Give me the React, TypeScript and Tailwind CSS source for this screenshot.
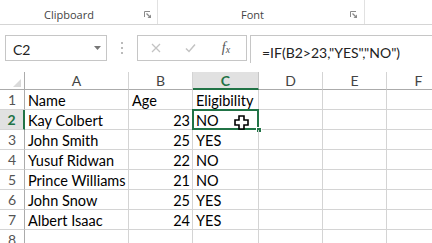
import React from 'react';

const cellFont = { fontFamily: 'Lato, "Open Sans", sans-serif' };

const rows = [
  { name: 'Name', age: 'Age', elig: 'Eligibility' },
  { name: 'Kay Colbert', age: '23', elig: 'NO' },
  { name: 'John Smith', age: '25', elig: 'YES' },
  { name: 'Yusuf Ridwan', age: '22', elig: 'NO' },
  { name: 'Prince Williams', age: '21', elig: 'NO' },
  { name: 'John Snow', age: '25', elig: 'YES' },
  { name: 'Albert Isaac', age: '24', elig: 'YES' },
  { name: '', age: '', elig: '' },
];

function Launcher() {
  return (
    <svg width="8" height="8" viewBox="0 0 8 8" className="text-[#8a8a8a]">
      <path d="M0.5 6V0.5H6" fill="none" stroke="currentColor" strokeWidth="1" />
      <path d="M2.5 2.5L6.5 6.5" stroke="currentColor" strokeWidth="1.2" />
      <path d="M7 3.5V7H3.5Z" fill="currentColor" />
    </svg>
  );
}

function CellCursor() {
  return (
    <svg width="15" height="15" viewBox="0 0 15 15" className="absolute left-[41px] top-[5px]">
      <path
        d="M5 1H10V5H14V10H10V14H5V10H1V5H5Z"
        fill="#fff"
        stroke="#000"
        strokeWidth="1.6"
        strokeLinejoin="miter"
      />
    </svg>
  );
}

export default function App() {
  return (
    <div className="w-[432px] h-[243px] overflow-hidden bg-white select-none">
      {/* Ribbon group labels */}
      <div
        className="flex h-[25px] border-b border-[#d5d5d5] text-[11px] text-[#444]"
        style={{ fontFamily: '"Open Sans", sans-serif' }}
      >
        <div className="w-[158px] flex items-center border-r border-[#e1e1e1] pt-[6px] pl-[44px] pr-[5px]">
          <span className="flex-1">Clipboard</span>
          <Launcher />
        </div>
        <div className="w-[207px] flex items-center border-r border-[#e1e1e1] pt-[6px] pl-[83px] pr-[6px]">
          <span className="flex-1">Font</span>
          <Launcher />
        </div>
        <div className="flex-1" />
      </div>

      {/* Formula bar */}
      <div className="h-[47px] flex items-start pt-[10px]">
        <div
          className="ml-[5px] w-[102px] h-[26px] border border-[#c6c6c6] flex items-center pl-[7px] pr-[5px] text-[14px] text-[#222]"
          style={cellFont}
        >
          <span className="flex-1 pt-[2px]">C2</span>
          <svg width="7" height="4" viewBox="0 0 7 4">
            <path d="M0 0H7L3.5 4Z" fill="#777" />
          </svg>
        </div>
        <div className="w-[30px] h-[26px] flex flex-col items-center justify-center gap-[3px]">
          <span className="w-[2px] h-[2px] bg-[#bbb]" />
          <span className="w-[2px] h-[2px] bg-[#bbb]" />
          <span className="w-[2px] h-[2px] bg-[#bbb]" />
        </div>
        <div className="w-[110px] h-[26px] border border-[#c6c6c6] flex items-center">
          <div className="w-[36px] flex justify-center">
            <svg width="10" height="10" viewBox="0 0 10 10">
              <path d="M1 1L9 9M9 1L1 9" stroke="#c3c3c3" strokeWidth="1.3" />
            </svg>
          </div>
          <div className="w-[32px] flex justify-center">
            <svg width="11" height="10" viewBox="0 0 11 10">
              <path d="M1 5.5L4 8.5L10 1.5" fill="none" stroke="#c3c3c3" strokeWidth="1.5" />
            </svg>
          </div>
          <div
            className="flex-1 flex justify-center italic text-[#555] text-[14px] leading-none"
            style={{ fontFamily: '"Liberation Serif", serif' }}
          >
            <span>f</span>
            <span className="text-[10px] mt-[4px]">x</span>
          </div>
        </div>
        <div
          className="ml-[3px] flex-1 h-[28px] border-t border-l border-[#c6c6c6] pl-[11px] pt-[6px] text-[14px] text-[#222] whitespace-nowrap"
          style={cellFont}
        >
          =IF(B2&gt;23,"YES","NO")
        </div>
      </div>

      {/* Grid */}
      <div
        className="grid grid-cols-[25px_104px_64px_66px_64px_64px_64px] grid-rows-[18px_repeat(8,20px)]"
        style={cellFont}
      >
        {/* Header row */}
        <div className="border-r border-b border-[#ababab] flex items-end justify-end pr-[3px] pb-[2px]">
          <svg width="8" height="8" viewBox="0 0 8 8">
            <path d="M8 0V8H0Z" fill="#dadada" />
          </svg>
        </div>
        {['A', 'B', 'C', 'D', 'E', 'F'].map((h) =>
          h === 'C' ? (
            <div
              key={h}
              className="bg-[#e1e1e1] border-r border-[#c6c6c6] border-b-2 border-b-[#217346] flex items-center justify-center text-[14px] font-bold text-[#217346]"
            >
              {h}
            </div>
          ) : (
            <div
              key={h}
              className="border-r border-[#d4d4d4] border-b border-b-[#ababab] flex items-center justify-center text-[14px] text-[#444]"
            >
              {h}
            </div>
          )
        )}

        {rows.map((r, i) => {
          const n = i + 1;
          const sel = n === 2;
          return (
            <React.Fragment key={n}>
              <div
                className={
                  sel
                    ? 'bg-[#e1e1e1] border-r-2 border-r-[#217346] border-b border-[#d4d4d4] flex items-end justify-center pb-[2px] leading-none text-[14px] font-bold text-[#217346]'
                    : 'border-r border-[#ababab] border-b border-b-[#d4d4d4] flex items-end justify-center pb-[2px] leading-none text-[14px] text-[#555]'
                }
              >
                {n}
              </div>
              <div className="border-r border-b border-[#d4d4d4] flex items-end pl-[3px] pb-[1px] leading-none text-[14.5px] text-black whitespace-nowrap">
                {r.name}
              </div>
              <div
                className={`border-r border-b border-[#d4d4d4] flex items-end pb-[1px] leading-none text-[14.5px] text-black whitespace-nowrap ${
                  n === 1 ? 'pl-[3px]' : 'justify-end pr-[2px]'
                }`}
              >
                {r.age}
              </div>
              <div className="relative border-r border-b border-[#d4d4d4] flex items-end pl-[3px] pb-[1px] leading-none text-[14.5px] text-black whitespace-nowrap">
                {r.elig}
                {sel && (
                  <>
                    <div className="absolute left-[-1px] top-[-1px] right-[-1px] bottom-[-1px] border-2 border-[#217346]" />
                    <div className="absolute right-[-4px] bottom-[-4px] w-[6px] h-[6px] bg-[#217346] border border-white" />
                    <CellCursor />
                  </>
                )}
              </div>
              <div className="border-r border-b border-[#d4d4d4]" />
              <div className="border-r border-b border-[#d4d4d4]" />
              <div className="border-r border-b border-[#d4d4d4]" />
            </React.Fragment>
          );
        })}
      </div>
    </div>
  );
}
